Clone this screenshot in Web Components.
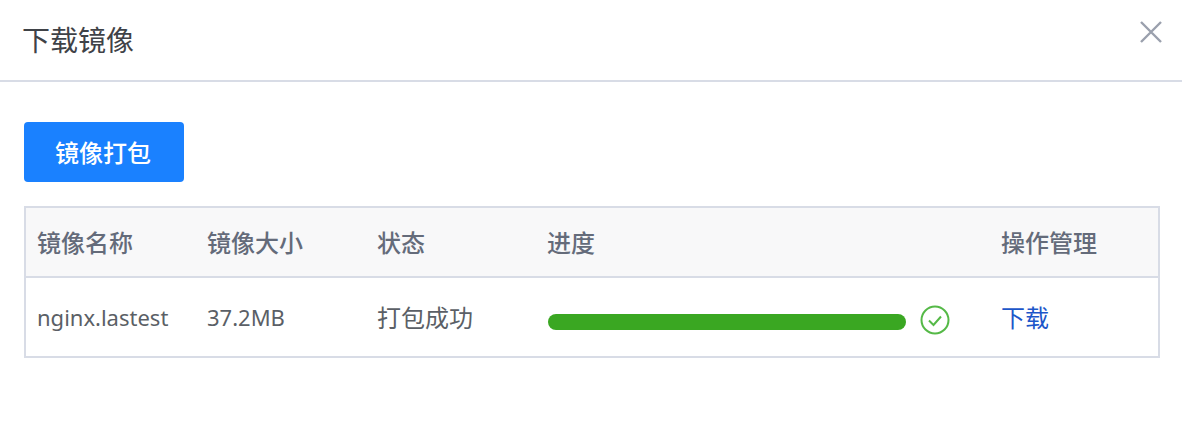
<!DOCTYPE html>
<html lang="zh-CN"><head><meta charset="utf-8"><title>下载镜像</title>
<style>html,body{margin:0;padding:0;background:#fff;font-family:"Noto Sans","Noto Sans CJK SC",sans-serif}</style>
</head><body>
<image-dialog heading="下载镜像">
  <action-button>镜像打包</action-button>
  <image-table></image-table>
</image-dialog>
<script>
customElements.define('image-dialog',class extends HTMLElement{
  connectedCallback(){
    const s=this.attachShadow({mode:'open'});
    s.innerHTML=`<style>
    :host{display:block;width:1182px;height:434px;overflow:hidden;background:#fff;box-sizing:border-box}
    header{height:80px;border-bottom:2px solid #d8dce6;display:flex;align-items:center;justify-content:space-between;padding:0 19px 0 22px}
    h1{margin:0 0 3px;font:400 28px/1 "Noto Sans CJK SC",sans-serif;color:#3f4247}
    svg{display:block;margin-bottom:16px}
    main{padding:40px 22px 0 24px;display:flex;flex-direction:column;align-items:flex-start;gap:24px}
    </style><header><h1>${this.getAttribute('heading')}</h1>
    <svg width="24" height="24" viewBox="0 0 24 24" fill="none" stroke="#9aa0ad" stroke-width="2.4"><path d="M2 2 22 22M22 2 2 22"/></svg></header>
    <main><slot></slot></main>`;
  }
});
customElements.define('action-button',class extends HTMLElement{
  connectedCallback(){
    const s=this.attachShadow({mode:'open'});
    s.innerHTML=`<style>:host{display:flex;align-items:center;justify-content:center;box-sizing:border-box;width:160px;height:60px;padding-right:2px;background:#1a81ff;border-radius:4px;color:#fff;font:500 24px/1 "Noto Sans CJK SC",sans-serif}</style><slot></slot>`;
  }
});
customElements.define('progress-bar',class extends HTMLElement{
  connectedCallback(){
    const s=this.attachShadow({mode:'open'});
    s.innerHTML=`<style>:host{display:flex;align-items:center;gap:14px;margin-left:1px;padding-top:6px}
    .bar{width:358px;height:16px;margin-top:4px;border-radius:8px;background:#3aa722}
    svg{display:block}</style><div class="bar"></div>
    <svg width="30" height="30" viewBox="0 0 30 30" fill="none" stroke="#55b947" stroke-width="2"><circle cx="15" cy="15" r="13.5"/><path d="M9 15.5 13.5 20 21 11.5" stroke-width="2"/></svg>`;
  }
});
customElements.define('image-table',class extends HTMLElement{
  connectedCallback(){
    const s=this.attachShadow({mode:'open'});
    s.innerHTML=`<style>
    :host{display:block;width:1136px;box-sizing:border-box;border:2px solid #d8dce6;font:400 24px/1 "Noto Sans CJK SC",sans-serif}
    .row{display:grid;grid-template-columns:170px 170px 170px 454px 1fr;align-items:center;margin-left:-1px}
    .row>*{padding-left:12px;white-space:nowrap}
    .head{height:68px;background:#f8f8f9;border-bottom:2px solid #d8dce6;color:#646b7a;font-weight:500;margin-left:0}
    .head>*{padding-left:11px;padding-bottom:1px}
    .body{height:78px;color:#5b5f66}
    .latin{font-family:"Noto Sans","Noto Sans CJK SC",sans-serif;font-size:22px}
    a{color:#1c56c9;text-decoration:none}
    </style>
    <div class="row head"><div>镜像名称</div><div>镜像大小</div><div>状态</div><div>进度</div><div>操作管理</div></div>
    <div class="row body"><div class="latin">nginx.lastest</div><div class="latin">37.2MB</div><div>打包成功</div><div><progress-bar></progress-bar></div><div><a href="#">下载</a></div></div>`;
  }
});
</script>
</body></html>
